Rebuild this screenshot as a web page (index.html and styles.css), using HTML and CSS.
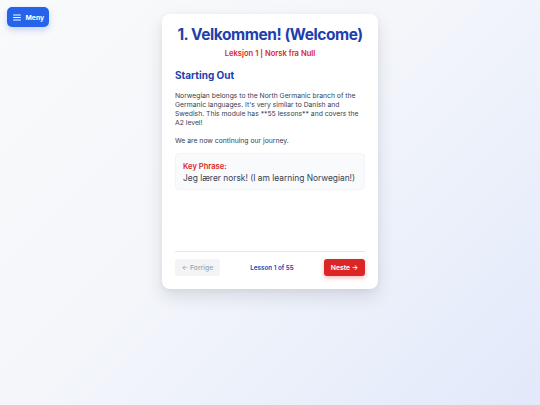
FILE: index.html
```html
<!DOCTYPE html>
<html lang="no">
<head>
<meta charset="utf-8">
<title>Velkommen</title>
<link rel="stylesheet" href="styles.css">
</head>
<body>
<button class="menu-btn">
  <svg class="menu-icon" viewBox="0 0 8 7" width="8" height="7"><path d="M0.6 1h6.8M0.6 3.5h6.8M0.6 6h6.8" stroke="#fff" stroke-width="1.1" stroke-linecap="round" fill="none"/></svg>
  <span>Meny</span>
</button>
<main class="page">
  <section class="card">
    <header class="card-head">
      <h1 class="title">1. Velkommen! (Welcome)</h1>
      <p class="subtitle">Leksjon 1 | Norsk fra Null</p>
    </header>
    <div class="content">
      <h2 class="section-title">Starting Out</h2>
      <p class="text">Norwegian belongs to the North Germanic branch of the Germanic languages. It's very similar to Danish and Swedish. This module has **55 lessons** and covers the A2 level!</p>
      <p class="text text-2">We are now continuing our journey.</p>
      <div class="phrase">
        <div class="phrase-label">Key Phrase:</div>
        <div class="phrase-text">Jeg lærer norsk! (I am learning Norwegian!)</div>
      </div>
    </div>
    <footer class="card-foot">
      <button class="btn btn-prev">← Forrige</button>
      <span class="progress">Lesson 1 of 55</span>
      <button class="btn btn-next">Neste →</button>
    </footer>
  </section>
</main>
</body>
</html>
```

FILE: styles.css
```css
* { box-sizing: border-box; }
html, body { height: 100%; }
body {
  margin: 0;
  font-family: Inter, "Noto Sans", sans-serif;
  background: linear-gradient(135deg, #f9fafb 0%, #f4f6fa 45%, #e1e9fa 100%);
  color: #374151;
}
.menu-btn {
  position: absolute;
  left: 7px;
  top: 7px;
  width: 42px;
  height: 20px;
  display: flex;
  align-items: center;
  gap: 4.5px;
  padding: 0 0 0 6px;
  border: none;
  border-radius: 5px;
  background: #2563eb;
  color: #fff;
  font-family: Inter, sans-serif;
  font-weight: 700;
  font-size: 6.8px;
  box-shadow: 0 3px 6px rgba(37, 99, 235, 0.25);
}
.menu-icon { display: block; }
.page {
  display: flex;
  justify-content: center;
  padding-top: 14px;
}
.card {
  width: 216px;
  height: 275px;
  background: #fff;
  border-radius: 8px;
  box-shadow: 0 8px 18px rgba(30, 41, 59, 0.12), 0 2px 5px rgba(30, 41, 59, 0.05);
  padding: 11px 13px 13px 13px;
  display: flex;
  flex-direction: column;
}
.card-head { text-align: center; }
.title {
  margin: 0;
  font-size: 15.5px;
  font-weight: 700;
  color: #1e40af;
  letter-spacing: -0.45px;
  line-height: 20px;
  white-space: nowrap;
}
.subtitle {
  margin: 4px 0 0;
  font-size: 7.6px;
  font-weight: 600;
  color: #dc2626;
  line-height: 10px;
}
.content { flex: 1; }
.section-title {
  margin: 9.5px 0 0;
  font-size: 10px;
  font-weight: 700;
  color: #1e40af;
  line-height: 13px;
}
.text {
  margin: 9px 0 0;
  font-size: 6.8px;
  line-height: 9.2px;
  color: #374151;
}
.text-2 { margin-top: 8.2px; }
.phrase {
  margin-top: 8.7px;
  background: #f8fafc;
  border: 1px solid #f1f5f9;
  border-radius: 4px;
  padding: 7px 7px 5px 7px;
}
.phrase-label {
  font-size: 7.6px;
  font-weight: 600;
  color: #dc2626;
  line-height: 11px;
}
.phrase-text {
  font-size: 8.4px;
  color: #374151;
  line-height: 12px;
  white-space: nowrap;
}
.card-foot {
  border-top: 1px solid #e5e7eb;
  padding-top: 7px;
  display: flex;
  justify-content: space-between;
  align-items: center;
}
.btn {
  height: 17px;
  border: none;
  border-radius: 3px;
  font-family: Inter, sans-serif;
  font-size: 6.8px;
  font-weight: 600;
  padding: 0;
  white-space: nowrap;
  text-align: center;
}
.btn-prev {
  width: 45px;
  background: #f3f4f6;
  color: #9ca3af;
  font-weight: 500;
}
.btn-next {
  width: 41px;
  background: #dc2626;
  color: #fff;
  box-shadow: 0 2px 4px rgba(220, 38, 38, 0.3);
}
.progress {
  font-size: 6.3px;
  font-weight: 600;
  color: #1e40af;
}
```
